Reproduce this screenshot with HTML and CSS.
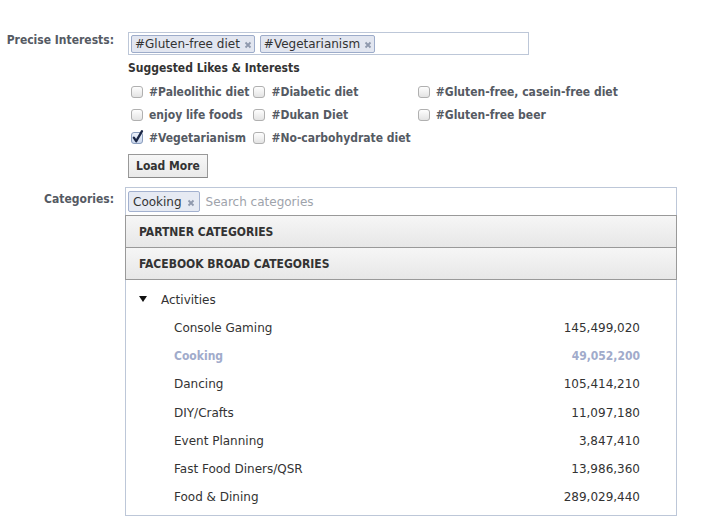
FILE: index.html
```html
<!DOCTYPE html>
<html>
<head>
<meta charset="utf-8">
<link rel="stylesheet" href="styles.css">
</head>
<body>
<div class="page">
  <div class="form">
    <div class="label">Precise Interests:</div>
    <div class="field field-interests">
      <div class="token-input">
        <span class="token">#Gluten-free diet<svg class="x" viewBox="0 0 8 8" width="8" height="8"><path d="M1.5 1.5L6.5 6.5M6.5 1.5L1.5 6.5"/></svg></span>
        <span class="token">#Vegetarianism<svg class="x" viewBox="0 0 8 8" width="8" height="8"><path d="M1.5 1.5L6.5 6.5M6.5 1.5L1.5 6.5"/></svg></span>
      </div>
      <div class="suggest-title">Suggested Likes &amp; Interests</div>
      <div class="suggest-grid">
        <label class="opt"><svg class="cb" viewBox="0 0 12 12" width="12" height="12"><defs><linearGradient id="g" x1="0" y1="0" x2="0" y2="1"><stop offset="0" stop-color="#ffffff"/><stop offset="1" stop-color="#e2e2e2"/></linearGradient><linearGradient id="gb" x1="0" y1="0" x2="0" y2="1"><stop offset="0" stop-color="#eef3fb"/><stop offset="1" stop-color="#c9d6ec"/></linearGradient></defs><rect x="0.5" y="0.5" width="11" height="11" rx="2.5" fill="url(#g)" stroke="#b0b0b0"/></svg>#Paleolithic diet</label>
        <label class="opt"><svg class="cb" viewBox="0 0 12 12" width="12" height="12"><rect x="0.5" y="0.5" width="11" height="11" rx="2.5" fill="url(#g)" stroke="#b0b0b0"/></svg>#Diabetic diet</label>
        <label class="opt col3"><svg class="cb" viewBox="0 0 12 12" width="12" height="12"><rect x="0.5" y="0.5" width="11" height="11" rx="2.5" fill="url(#g)" stroke="#b0b0b0"/></svg>#Gluten-free, casein-free diet</label>
        <label class="opt"><svg class="cb" viewBox="0 0 12 12" width="12" height="12"><rect x="0.5" y="0.5" width="11" height="11" rx="2.5" fill="url(#g)" stroke="#b0b0b0"/></svg>enjoy life foods</label>
        <label class="opt"><svg class="cb" viewBox="0 0 12 12" width="12" height="12"><rect x="0.5" y="0.5" width="11" height="11" rx="2.5" fill="url(#g)" stroke="#b0b0b0"/></svg>#Dukan Diet</label>
        <label class="opt col3"><svg class="cb" viewBox="0 0 12 12" width="12" height="12"><rect x="0.5" y="0.5" width="11" height="11" rx="2.5" fill="url(#g)" stroke="#b0b0b0"/></svg>#Gluten-free beer</label>
        <label class="opt"><svg class="cb" viewBox="0 0 12 12" width="12" height="12"><rect x="0.5" y="0.5" width="11" height="11" rx="2.5" fill="url(#gb)" stroke="#8a9dbd"/><path d="M2.8 5.6L5.2 9.2L11 -0.8" fill="none" stroke="#1b2746" stroke-width="2.3" stroke-linecap="round" stroke-linejoin="round"/></svg>#Vegetarianism</label>
        <label class="opt"><svg class="cb" viewBox="0 0 12 12" width="12" height="12"><rect x="0.5" y="0.5" width="11" height="11" rx="2.5" fill="url(#g)" stroke="#b0b0b0"/></svg>#No-carbohydrate diet</label>
      </div>
      <button class="btn">Load More</button>
    </div>

    <div class="label cat-label">Categories:</div>
    <div class="field">
      <div class="cat-top">
        <span class="token cat-token">Cooking<svg class="x" viewBox="0 0 8 8" width="8" height="8"><path d="M1.5 1.5L6.5 6.5M6.5 1.5L1.5 6.5"/></svg></span>
        <span class="placeholder">Search categories</span>
      </div>
      <div class="cat-head">PARTNER CATEGORIES</div>
      <div class="cat-head">FACEBOOK BROAD CATEGORIES</div>
      <div class="cat-list">
        <div class="group"><span class="tri"></span>Activities</div>
        <div class="item"><span>Console Gaming</span><span>145,499,020</span></div>
        <div class="item selected"><span>Cooking</span><span>49,052,200</span></div>
        <div class="item"><span>Dancing</span><span>105,414,210</span></div>
        <div class="item"><span>DIY/Crafts</span><span>11,097,180</span></div>
        <div class="item"><span>Event Planning</span><span>3,847,410</span></div>
        <div class="item"><span>Fast Food Diners/QSR</span><span>13,986,360</span></div>
        <div class="item"><span>Food &amp; Dining</span><span>289,029,440</span></div>
      </div>
    </div>
  </div>
</div>
</body>
</html>
```

FILE: styles.css
```css
html, body {
  margin: 0;
  padding: 0;
  background: #ffffff;
}

.page {
  padding: 32px 0 0 2px;
  font-family: "DejaVu Sans", "Liberation Sans", sans-serif;
  font-size: 12px;
  color: #333333;
}

.form {
  display: grid;
  grid-template-columns: 112px 552px;
  column-gap: 11px;
  row-gap: 9px;
  align-items: start;
}

.label {
  text-align: right;
  white-space: nowrap;
  font-family: "DejaVu Sans Condensed", "DejaVu Sans", sans-serif;
  font-stretch: condensed;
  font-weight: bold;
  color: #555a63;
  line-height: 16px;
}

.cat-label {
  padding-top: 4px;
}

.field-interests {
  padding-left: 3px;
  display: flex;
  flex-direction: column;
  align-items: flex-start;
}

.token-input {
  box-sizing: border-box;
  width: 401px;
  height: 23px;
  border: 1px solid #bdc7d8;
  padding: 2px;
  display: flex;
  gap: 5px;
  align-items: flex-start;
}

.token {
  box-sizing: border-box;
  display: inline-flex;
  align-items: center;
  height: 18px;
  border: 1px solid #9dacca;
  border-radius: 2px;
  background: #e2e6f0;
  padding: 0 2px 0 3px;
  color: #333333;
  line-height: 16px;
  gap: 4px;
  white-space: nowrap;
}

.x {
  margin-top: 2px;
}

.x path {
  stroke: #8f99ad;
  stroke-width: 1.8;
  fill: none;
}

.suggest-title {
  margin-top: 5px;
  font-family: "DejaVu Sans Condensed", "DejaVu Sans", sans-serif;
  font-stretch: condensed;
  font-weight: bold;
  color: #333333;
  line-height: 16px;
}

.suggest-grid {
  margin-top: 4px;
  display: grid;
  grid-template-columns: repeat(3, auto);
  justify-content: start;
  column-gap: 1px;
}

.opt {
  display: flex;
  align-items: center;
  height: 23px;
  padding-left: 3px;
  font-family: "DejaVu Sans Condensed", "DejaVu Sans", sans-serif;
  font-stretch: condensed;
  font-weight: bold;
  color: #555a63;
  white-space: nowrap;
}

.opt.col3 {
  padding-left: 6px;
}

.cb {
  flex: none;
  margin-right: 6px;
  overflow: visible;
}

.btn {
  margin-top: 5px;
  box-sizing: border-box;
  height: 24px;
  padding: 0 7px;
  border: 1px solid #999999;
  border-bottom-color: #888888;
  background: linear-gradient(#f7f7f7, #e9e9e9);
  font-family: "DejaVu Sans Condensed", "DejaVu Sans", sans-serif;
  font-stretch: condensed;
  font-size: 12px;
  font-weight: bold;
  color: #333333;
}

.cat-top {
  box-sizing: border-box;
  height: 28px;
  border: 1px solid #bdc7d8;
  border-bottom: none;
  padding: 3px 2px;
  display: flex;
  align-items: center;
  gap: 6px;
}

.cat-token {
  height: 21px;
  padding: 0 4px;
  gap: 5px;
  background: #e6eaf3;
  border-color: #a3b1cf;
}

.placeholder {
  color: #9ea3ab;
}

.cat-head {
  box-sizing: border-box;
  height: 33px;
  border: 1px solid #999999;
  background: linear-gradient(#f6f6f6, #e7e7e7);
  padding-left: 13px;
  display: flex;
  align-items: center;
  font-family: "DejaVu Sans Condensed", "DejaVu Sans", sans-serif;
  font-stretch: condensed;
  font-weight: bold;
  color: #333333;
}

.cat-head + .cat-head {
  margin-top: -1px;
}

.cat-list {
  border: 1px solid #bdc7d8;
  border-top: none;
  padding: 6px 36px 4px 0;
}

.group {
  height: 28px;
  display: flex;
  align-items: center;
  padding-left: 13px;
  color: #333333;
}

.tri {
  width: 0;
  height: 0;
  border-left: 4px solid transparent;
  border-right: 4px solid transparent;
  border-top: 6px solid #111111;
  margin-right: 14px;
  margin-top: -3px;
}

.item {
  height: 28.2px;
  display: flex;
  align-items: center;
  justify-content: space-between;
  padding-left: 48px;
  color: #333333;
}

.item.selected {
  font-family: "DejaVu Sans Condensed", "DejaVu Sans", sans-serif;
  font-stretch: condensed;
  font-weight: bold;
  color: #a1abcb;
}
```
